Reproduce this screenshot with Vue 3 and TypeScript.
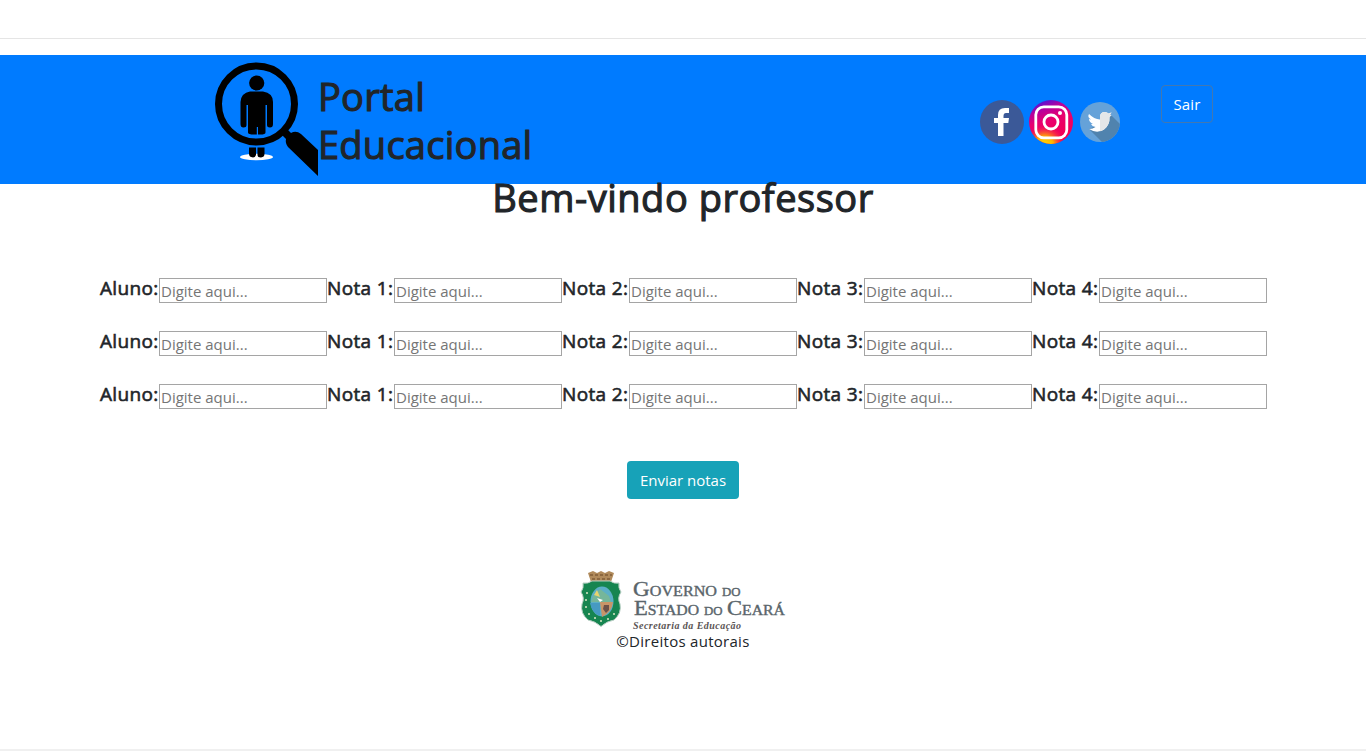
<script setup lang="ts">
interface Row { id: number }
const rows: Row[] = [{ id: 1 }, { id: 2 }, { id: 3 }]
const fields: string[] = ['Aluno:', 'Nota 1:', 'Nota 2:', 'Nota 3:', 'Nota 4:']
</script>

<template>
  <div class="page">
    <hr class="rule" />
    <header class="header">
      <svg class="logo" width="103" height="115" viewBox="0 -1 103 115">
        <ellipse cx="41.500" cy="94" rx="16.500" ry="3.300" fill="#fff" />
        <circle cx="41.500" cy="41" r="38" fill="none" stroke="#000" stroke-width="7" />
        <circle cx="41.700" cy="20" r="7.600" />
        <path d="M35 28.500H48Q58 30 58 39V61Q58 64.500 55 64.500Q52 64.500 52 62V42H50.500V69.500Q50.500 72 43 71.500V64H41.800V71.500Q33 72 33 69.500V42H31.500V62Q31.500 64.500 28.500 64.500Q25.500 64.500 25.500 61V39Q26 30 35 28.500Z" />
        <path d="M34 84.500H41V92Q40 94.500 38 94.500Q34 94 34 91ZM42.500 84.500H49.500V91Q49.500 94 46 94.500Q42.500 94.500 42.500 92Z" />
        <path d="M67 72L72 66L76 70Q81 67 86 71L103 87V113L73 84Q70 80 71 76Z" />
      </svg>
      <h1 class="brand">Portal<br />Educacional</h1>
      <div class="social">
        <svg width="44" height="44" viewBox="0 0 44 44">
          <circle cx="22" cy="22" r="22" fill="#3b5998" />
          <path d="M18 36V23H14V18H18V15Q18 8 25 8H29V13H26Q23.500 13 23.500 16V18H29L28.300 23H23.500V36Z" fill="#fff" />
        </svg>
        <svg class="instagram" width="44" height="44" viewBox="0 0 44 44">
          <defs>
            <linearGradient id="ig-base" x1="0.250" y1="0" x2="0.600" y2="1">
              <stop offset="0" stop-color="#3a18e4" />
              <stop offset="0.220" stop-color="#b4009f" />
              <stop offset="0.450" stop-color="#e80070" />
              <stop offset="1" stop-color="#f5004c" />
            </linearGradient>
            <radialGradient id="ig-glow" cx="0.350" cy="1.050" r="0.480">
              <stop offset="0" stop-color="#ffe100" />
              <stop offset="0.450" stop-color="#ffb400" />
              <stop offset="1" stop-color="#ff2448" stop-opacity="0" />
            </radialGradient>
          </defs>
          <circle cx="22" cy="22" r="22" fill="url(#ig-base)" />
          <circle cx="22" cy="22" r="22" fill="url(#ig-glow)" />
          <g fill="none" stroke="#fff" stroke-width="2.800">
            <rect x="6.800" y="6.800" width="31" height="31" rx="8" />
            <circle cx="22" cy="22" r="7" />
          </g>
          <circle cx="31" cy="13" r="2" fill="#fff" />
        </svg>
        <svg class="twitter" width="40" height="40" viewBox="0 0 40 40">
          <defs><clipPath id="tw-disc"><circle cx="20" cy="20" r="20" /></clipPath></defs>
          <circle cx="20" cy="20" r="20" fill="#65a2d9" />
          <path clip-path="url(#tw-disc)" d="M29 11L42 24V42H24L9 27L18 23Z" fill="#5083ae" />
          <path d="M9 12Q14 17 20 17.500V15Q20 10 25 10Q27 10 28.500 11.500L31.500 10.500L30 13L31.500 13L29.500 15Q30 23 24 27.500Q17 32 9 27Q13 27 15.500 25Q12 24.500 11 22H13Q9 20 9 17L11 17.500Q7 15 9 12Z" fill="#fff" />
          <path d="M20 17.500V15Q20 10 25 10Q27 10 28.500 11.500L31.500 10.500L30 13L31.500 13L29.500 15Q30 23 24 27.500Q22 29 20 29.300Z" fill="#e4e6e8" />
        </svg>
      </div>
      <button class="logout" type="button">Sair</button>
    </header>

    <main class="content">
      <h1 class="welcome">Bem-vindo professor</h1>
      <form class="grades" @submit.prevent>
        <div v-for="row in rows" :key="row.id" class="row">
          <template v-for="(field, i) in fields" :key="field">
            <label class="label" :class="{ student: i === 0 }" :for="`f${row.id}-${i}`">{{ field }}</label>
            <input :id="`f${row.id}-${i}`" class="input" type="text" placeholder="Digite aqui..." />
          </template>
        </div>
        <button class="send" type="submit">Enviar notas</button>
      </form>
    </main>

    <footer class="footer">
      <svg class="seal" width="206" height="62" viewBox="0 0 206 62">
        <path d="M8 2L13 0L17 2L21 0L25 2L29 0L34 2L31 11H11Z" fill="#b08a5b" />
        <path d="M10 4H32M12 8H30" stroke="#805e39" stroke-width="1.500" stroke-dasharray="3 2" />
        <path d="M3 12Q8 13 12 10H30Q34 13 39 12Q38 17 41 21Q37 27 40 33Q42 42 34 49Q27 50 21 55.500Q15 50 8 49Q0 42 2 33Q5 27 1 21Q4 17 3 12Z" fill="#168550" stroke="#b8cfc4" />
        <ellipse cx="22" cy="30.500" rx="11.500" ry="15" fill="#5bafc7" />
        <path d="M13 25L20 18L29 25L31 31H11Z" fill="#75b69a" />
        <path d="M14 24L17 19L20 26Z" fill="#e8d36e" />
        <path d="M10 32H20V45Q12 42 10 32Z" fill="#469ac2" />
        <path d="M20 31H33Q32 41 22 46Z" fill="#c99568" />
        <path d="M24 34H29V39L26 42L23 38Z" fill="#6d5148" />
        <path d="M17 27L23 29L20 31Z" fill="#fff" />
        <g fill="#dbe8c6">
          <circle cx="7" cy="22" r="1" /><circle cx="6" cy="29" r="1" /><circle cx="6" cy="36" r="1" />
          <circle cx="9" cy="43" r="1" /><circle cx="15" cy="47" r="1" /><circle cx="21" cy="50" r="1" />
          <circle cx="28" cy="48" r="1" /><circle cx="34" cy="43" r="1" />
        </g>
        <g class="seal-text">
          <text x="53" y="25" textLength="84" lengthAdjust="spacingAndGlyphs">Governo</text>
          <text class="minor" x="142" y="25" textLength="18.500" lengthAdjust="spacingAndGlyphs">DO</text>
          <text x="54" y="44" textLength="65" lengthAdjust="spacingAndGlyphs">Estado</text>
          <text class="minor" x="124" y="44" textLength="18.500" lengthAdjust="spacingAndGlyphs">DO</text>
          <text x="147" y="44" textLength="58" lengthAdjust="spacingAndGlyphs">Ceará</text>
        </g>
        <text class="seal-sub" x="53" y="57.500" textLength="108" lengthAdjust="spacing">Secretaria da Educação</text>
      </svg>
      <p class="copyright">©Direitos autorais</p>
    </footer>
    <div class="bottom-line"></div>
  </div>
</template>

<style>
body { margin: 0; background: #fff; }
</style>

<style scoped>
.page {
  box-sizing: border-box;
  height: 751px;
  padding-top: 38px;
  display: flex;
  flex-direction: column;
  overflow: hidden;
  color: #212529;
  font: 400 15px/24px "Open Sans", "Noto Sans", sans-serif;
}
.page * { box-sizing: border-box; }
.rule { width: 100%; height: 1px; margin: 0 0 16px; border: 0; background: #e5e5e5; flex: none; }
.header { height: 129px; flex: none; display: flex; align-items: flex-start; padding: 7px 153px 0 215px; background: #007bff; }
.logo { flex: none; }
h1 { margin: 0; font-size: 38px; line-height: 48px; font-weight: 400; white-space: nowrap; -webkit-text-stroke: 1.1px #212529; }
.brand { margin-top: 10px; letter-spacing: 0.25px; }
.social { display: flex; align-items: center; margin: 38px 41px 0 auto; }
.instagram { margin-left: 5px; }
.twitter { margin-left: 7px; }
button { font: inherit; color: #fff; height: 38px; padding: 0; border-radius: 4px; white-space: nowrap; }
.logout { width: 52px; margin-top: 23px; border: 1px solid #4378b0; background: transparent; letter-spacing: .1px; }
.content { display: flex; flex-direction: column; align-items: center; }
.welcome { margin-top: -11px; letter-spacing: 0.52px; }
.grades { display: flex; flex-direction: column; align-items: center; margin-top: 57px; }
.row { display: flex; align-items: flex-start; height: 25px; margin-bottom: 28px; }
.label { width: 67px; margin-top: -2px; font-size: 19px; line-height: 24px; letter-spacing: .35px; white-space: nowrap; -webkit-text-stroke: .6px #212529; }
.label.student { width: 60px; padding-left: 1px; }
.input { width: 168px; height: 25px; padding: 1px 1px 0; border: 1px solid #a5a5a5; border-radius: 0; background: #fff; font: inherit; color: #212529; outline: 0; }
.input::placeholder { color: #757575; opacity: 1; }
.send { width: 112px; margin-top: 24px; border: 0; background: #17a2b8; }
.footer { margin-top: 72px; display: flex; flex-direction: column; align-items: center; }
.seal { display: block; }
.seal-text { fill: #5a656b; stroke: #5a656b; stroke-width: .4; font: 21.5px "Liberation Serif", serif; font-variant-caps: small-caps; }
.minor { font-size: 13px; }
.seal-sub { fill: #5b5555; font: italic bold 10px "Liberation Serif", serif; }
.copyright { margin: -4px 0 0; letter-spacing: .28px; }
.bottom-line { height: 2px; margin-top: auto; background: #f0f0f0; flex: none; }
</style>
